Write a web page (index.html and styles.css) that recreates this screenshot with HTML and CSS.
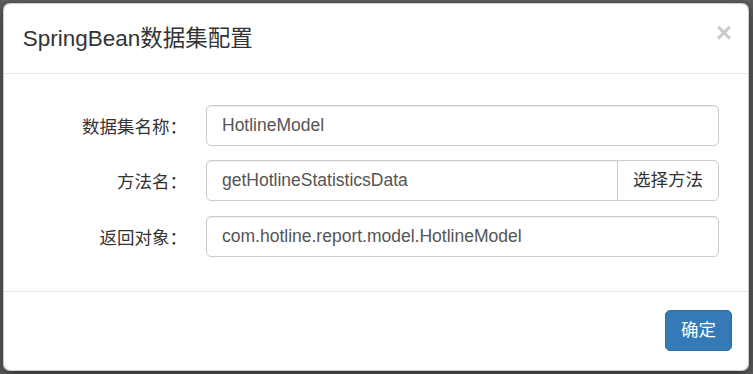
FILE: index.html
```html
<!DOCTYPE html>
<html lang="zh-CN">
<head>
    <meta charset="UTF-8">
    <meta name="viewport" content="width=device-width, initial-scale=1.0">
    <title>SpringBean数据集配置</title>
    <link rel="stylesheet" href="styles.css">
</head>
<body>
    <div class="modal">
        <div class="modal-header">
            <h4 class="modal-title">SpringBean数据集配置</h4>
            <button type="button" class="close">&times;</button>
        </div>

        <div class="modal-body">
            <form class="form-horizontal">
                <div class="form-group">
                    <label for="ds-name">数据集名称：</label>
                    <input type="text" id="ds-name" class="form-control" value="HotlineModel">
                </div>

                <div class="form-group">
                    <label for="method">方法名：</label>
                    <div class="input-group">
                        <input type="text" id="method" class="form-control" value="getHotlineStatisticsData">
                        <button type="button" class="btn btn-default">选择方法</button>
                    </div>
                </div>

                <div class="form-group">
                    <label for="return-type">返回对象：</label>
                    <input type="text" id="return-type" class="form-control" value="com.hotline.report.model.HotlineModel">
                </div>
            </form>
        </div>

        <div class="modal-footer">
            <button type="button" class="btn btn-primary">确定</button>
        </div>
    </div>
</body>
</html>
```

FILE: styles.css
```css
* {
    margin: 0;
    padding: 0;
    box-sizing: border-box;
}

body {
    font-family: "Liberation Sans", "Noto Sans CJK SC", sans-serif;
    font-size: 17.5px;
    color: #333;
    background: #5e5e5e;
    padding: 3px 4px 3px 3px;
}

.modal {
    width: 746px;
    height: 368px;
    background: white;
    border: 1px solid rgba(0, 0, 0, 0.2);
    border-radius: 7px;
    box-shadow: 0 5px 15px rgba(0, 0, 0, 0.5);
    display: flex;
    flex-direction: column;
}

.modal-header {
    display: flex;
    justify-content: space-between;
    align-items: flex-start;
    padding: 18.75px 16px 18.75px 18.75px;
    border-bottom: 1px solid #e5e5e5;
}

.modal-title {
    font-size: 22.5px;
    font-weight: normal;
    line-height: 31px;
    color: #333;
}

.close {
    background: none;
    border: none;
    font-family: "Liberation Sans", sans-serif;
    font-size: 28px;
    font-weight: bold;
    line-height: 1;
    color: #000;
    opacity: 0.2;
    margin-top: -4px;
    cursor: pointer;
}

.modal-body {
    flex: 1;
    padding: 31px 29px 30px 0;
}

.form-horizontal {
    display: flex;
    flex-direction: column;
    gap: 14.5px;
}

.form-group {
    display: grid;
    grid-template-columns: 183px 513px;
    column-gap: 19px;
    align-items: center;
}

.form-group label {
    text-align: right;
    font-weight: normal;
    color: #333;
}

.form-control {
    width: 100%;
    height: 41px;
    padding: 0 15px;
    font-family: "Liberation Sans", "Noto Sans CJK SC", sans-serif;
    font-size: 17.5px;
    color: #555;
    background: white;
    border: 1px solid #ccc;
    border-radius: 5px;
    box-shadow: inset 0 1px 1px rgba(0, 0, 0, 0.075);
}

.input-group {
    display: flex;
}

.input-group .form-control {
    flex: 1;
    border-top-right-radius: 0;
    border-bottom-right-radius: 0;
}

.btn {
    font-family: "Liberation Sans", "Noto Sans CJK SC", sans-serif;
    font-size: 17.5px;
    line-height: 25px;
    padding: 7px 15px;
    border: 1px solid transparent;
    border-radius: 5px;
    cursor: pointer;
}

.btn-default {
    height: 41px;
    margin-left: -1px;
    color: #333;
    background: white;
    border-color: #ccc;
    border-top-left-radius: 0;
    border-bottom-left-radius: 0;
}

.btn-primary {
    color: white;
    background: #337ab7;
    border-color: #2e6da4;
}

.modal-footer {
    padding: 18.75px 16px 18.75px 18.75px;
    text-align: right;
    border-top: 1px solid #e5e5e5;
}
```
